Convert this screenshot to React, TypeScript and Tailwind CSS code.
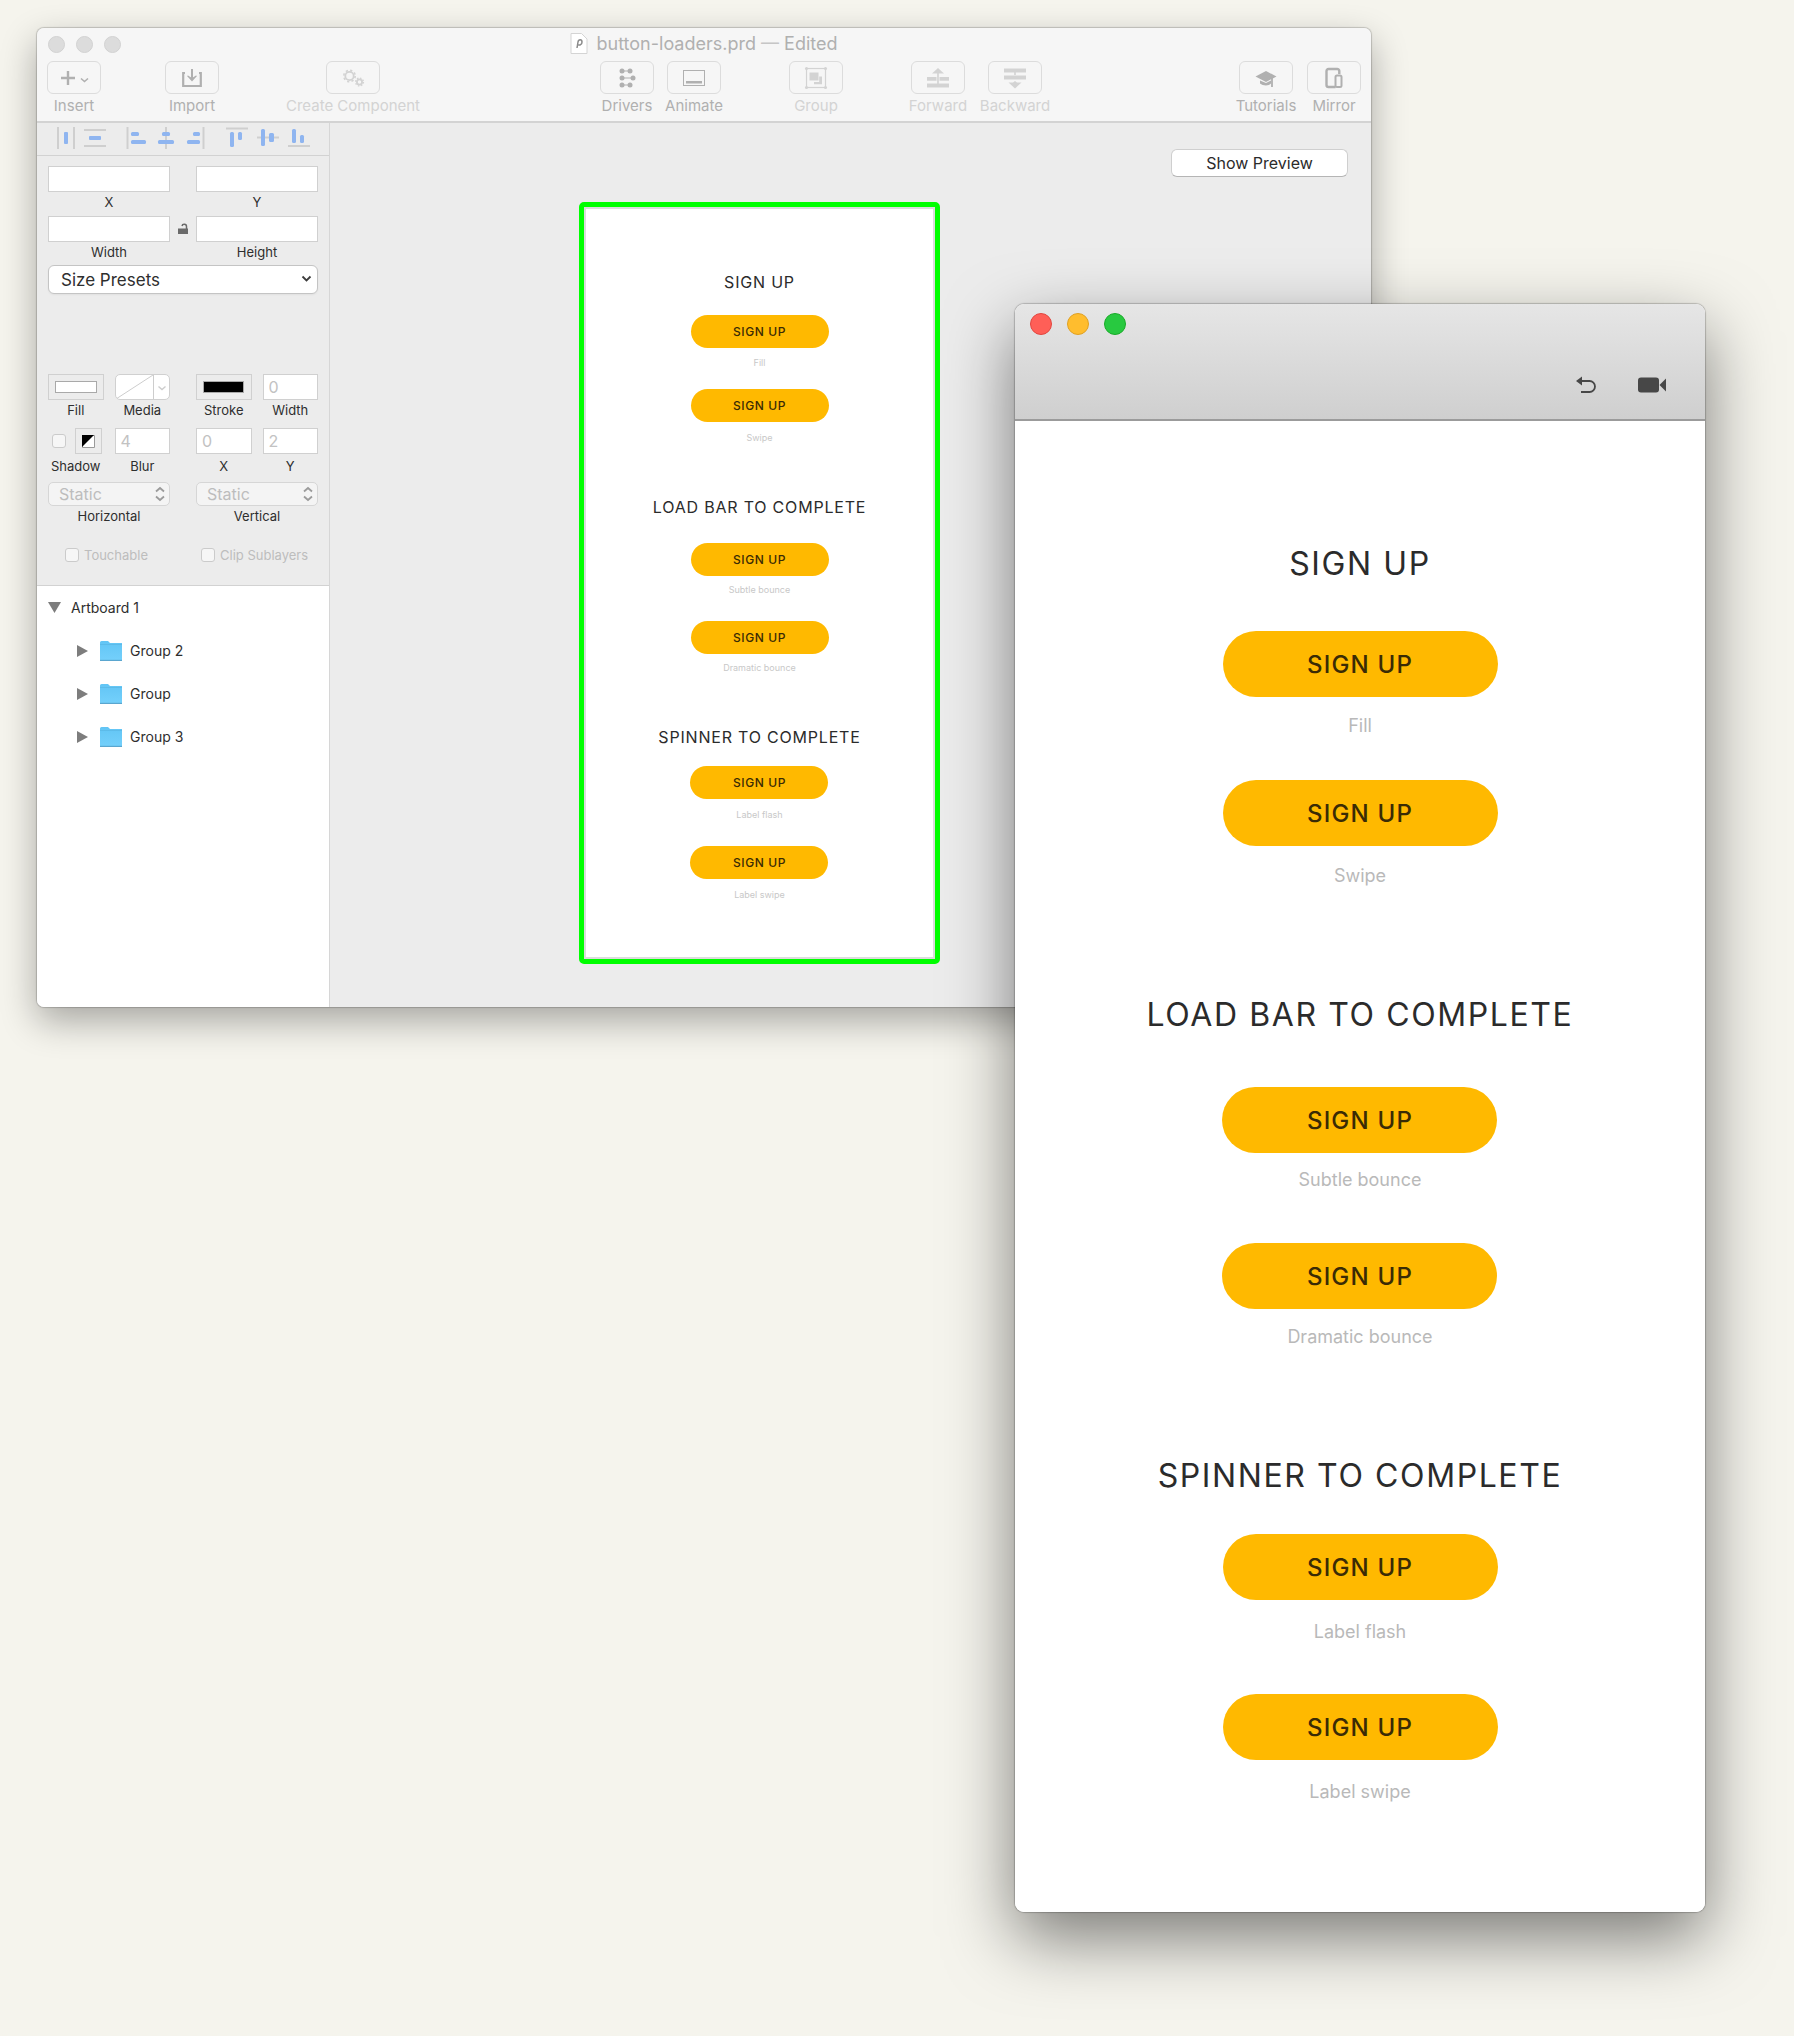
import React, { useId } from "react";

type Size = "small" | "large";

/* ---------- Shared artboard content ---------- */

const ARTBOARD = {
  small: {
    heading: "text-[16px] leading-[20px] tracking-wider",
    button: "w-[138px] h-[33px] text-[12px] tracking-wider",
    caption: "text-[9px] leading-[12px] text-[#c8c8c8]",
    body: "pt-[63px] pb-[56px]",
    sections: [
      { title: "SIGN UP", top: "", items: [["Fill", "mt-[23px]", "mt-[9px]"], ["Swipe", "mt-[20px]", "mt-[10px]"]] },
      { title: "LOAD BAR TO COMPLETE", top: "mt-[53px]", items: [["Subtle bounce", "mt-[26px]", "mt-[8px]"], ["Dramatic bounce", "mt-[25px]", "mt-[8px]"]] },
      { title: "SPINNER TO COMPLETE", top: "mt-[53px]", items: [["Label flash", "mt-[19px]", "mt-[10px]"], ["Label swipe", "mt-[25px]", "mt-[10px]"]] },
    ],
  },
  large: {
    heading: "text-[32px] leading-[40px] tracking-wider",
    button: "w-[275px] h-[66px] pt-0.5 text-[24px] tracking-wider",
    caption: "text-[18px] leading-[24px] text-[#b9b9b9]",
    body: "pt-[123px] pb-[108px]",
    sections: [
      { title: "SIGN UP", top: "", items: [["Fill", "mt-[47px]", "mt-[17px]"], ["Swipe", "mt-[42px]", "mt-[18px]"]] },
      { title: "LOAD BAR TO COMPLETE", top: "mt-[107px]", items: [["Subtle bounce", "mt-[52px]", "mt-[15px]"], ["Dramatic bounce", "mt-[51px]", "mt-[16px]"]] },
      { title: "SPINNER TO COMPLETE", top: "mt-[107px]", items: [["Label flash", "mt-[38px]", "mt-[20px]"], ["Label swipe", "mt-[50px]", "mt-[20px]"]] },
    ],
  },
};

function ArtboardContent({ size }: { size: Size }) {
  const s = ARTBOARD[size];
  return (
    <div className={`flex flex-col items-center bg-white ${s.body}`}>
      {s.sections.map((sec) => (
        <section key={sec.title} className={`flex flex-col items-center ${sec.top}`}>
          <h2 className={`whitespace-nowrap text-[#2b2b2b] ${s.heading}`}>{sec.title}</h2>
          {sec.items.map(([caption, gap, capGap]) => (
            <div key={caption} className={`flex flex-col items-center ${gap}`}>
              <button className={`rounded-full bg-[#ffb900] font-medium text-[#3a2b05] ${s.button}`}>SIGN UP</button>
              <p className={`${s.caption} ${capGap}`}>{caption}</p>
            </div>
          ))}
        </section>
      ))}
    </div>
  );
}

/* ---------- Toolbar ---------- */

const I = ({ children, w = 26, h = 22 }: { children: React.ReactNode; w?: number; h?: number }) => (
  <svg width={w} height={h} viewBox={`0 0 ${w} ${h}`} fill="none" aria-hidden="true">{children}</svg>
);

const icons = {
  insert: (
    <I w={30}>
      <path d="M2 11h14M9 4v14" stroke="currentColor" strokeWidth="2.400" />
      <path d="M22 11.500l3.500 3 3.500-3" stroke="currentColor" strokeWidth="1.600" />
    </I>
  ),
  import: (
    <I>
      <path d="M6 6H4.200v13h17.600V6H20" stroke="currentColor" strokeWidth="2.200" />
      <path d="M13 2v9" stroke="currentColor" strokeWidth="2" />
      <path d="M8 9l5 5.500L18 9l-1-.6-4 2.600-4-2.600z" fill="currentColor" />
    </I>
  ),
  component: (
    <I>
      <circle cx="9.500" cy="9" r="4.200" stroke="currentColor" strokeWidth="1.800" />
      <circle cx="9.500" cy="9" r="5.700" stroke="currentColor" strokeWidth="1.600" strokeDasharray="2.200 2.270" />
      <circle cx="19.500" cy="15" r="2.600" stroke="currentColor" strokeWidth="1.800" />
      <circle cx="19.500" cy="15" r="3.900" stroke="currentColor" strokeWidth="1.400" strokeDasharray="1.530 1.530" />
    </I>
  ),
  drivers: (
    <I>
      <path d="M8 4h8M8 11h11M8 18h8" stroke="currentColor" strokeWidth="1.200" />
      {[[8, 4], [16, 4], [8, 11], [19, 11], [8, 18], [16, 18]].map(([x, y]) => (
        <circle key={`${x}-${y}`} cx={x} cy={y} r="2.500" fill="currentColor" />
      ))}
    </I>
  ),
  animate: (
    <I>
      <rect x="2.500" y="3.500" width="21" height="15" stroke="currentColor" />
      <path d="M5 15.200h16" stroke="currentColor" strokeWidth="2.400" />
    </I>
  ),
  group: (
    <I>
      <rect x="3.500" y="1.500" width="19" height="19" stroke="currentColor" strokeWidth="1.200" />
      {[[3.5, 1.5], [22.5, 1.5], [3.5, 20.5], [22.5, 20.5]].map(([x, y]) => (
        <circle key={`${x}-${y}`} cx={x} cy={y} r="1.500" fill="currentColor" />
      ))}
      <path d="M6.500 5.500h9v8h-9zM11 15h5.200V9.500H19v7.800h-8z" fill="currentColor" />
    </I>
  ),
  forward: (
    <I>
      <path d="M13 4v13" stroke="currentColor" strokeWidth="1.600" />
      <path d="M7 6.500L13 1l6 5.500z" fill="currentColor" />
      <path d="M2 11.800h9.500M14.500 11.800H24M2 18.500h22" stroke="currentColor" strokeWidth="3.800" />
    </I>
  ),
  backward: (
    <I>
      <path d="M2 3.500h22M2 10.500h22" stroke="currentColor" strokeWidth="3.800" />
      <path d="M13 5v3" stroke="currentColor" strokeWidth="1.600" />
      <path d="M6.500 15.500h4.500L13 14l2 1.500h4.500L13 21.500z" fill="currentColor" />
    </I>
  ),
  tutorials: (
    <I>
      <path d="M13 4L2.500 9.500 13 15l10.500-5.500z" fill="currentColor" />
      <path d="M7 13.500v3c3 2.600 9 2.600 11 0v-3l-5 2.500z" fill="currentColor" />
      <path d="M19 11v9" stroke="currentColor" strokeWidth="1.800" />
    </I>
  ),
  mirror: (
    <I>
      <path d="M18.300 7V4a2 2 0 0 0-2-2H7.500a2 2 0 0 0-2 2v14a2 2 0 0 0 2 2h7" stroke="currentColor" strokeWidth="2.400" />
      <rect x="14.500" y="8.500" width="6" height="11.500" rx="1.500" stroke="currentColor" strokeWidth="2" />
    </I>
  ),
};

function Tool({ icon, label, className, dim }: { icon: React.ReactNode; label: string; className: string; dim?: boolean }) {
  return (
    <button className={`flex shrink-0 flex-col items-center ${dim ? "text-[#d3d3d3]" : "text-[#b0b0b0]"} ${className}`}>
      <span className="flex h-[33px] w-[54px] items-center justify-center rounded-md border border-[#dcdcdc]">{icon}</span>
      <span className="mt-0.5 text-[15px] leading-5 whitespace-nowrap">{label}</span>
    </button>
  );
}

function EditorHeader() {
  return (
    <header className="border-b-2 border-[#d3d3d3] bg-[#f6f6f6]">
      <div className="grid h-[33px] grid-cols-[1fr_auto_1fr] items-center px-[11px]">
        <div className="flex gap-[11px]">
          {["Close", "Minimise", "Zoom"].map((n) => (
            <button key={n} aria-label={n} className="size-[17px] rounded-full border border-[#d2d2d2] bg-[#dcdcdc]" />
          ))}
        </div>
        <h1 className="flex items-center gap-2 pb-0.5 text-[18px] leading-6 text-[#b0b0b0]">
          <svg width="18" height="21" viewBox="0 0 18 21" fill="#fff" stroke="#d4d4d4" aria-hidden="true">
            <path d="M1 .5h10.500L17 6v14.500H1z" />
            <path d="M7 15l1-6c.5-3 4-3 4 0 0 2.500-2.500 3.500-3.600 2.600" fill="none" stroke="#8a8a8a" strokeWidth="1.500" />
          </svg>
          <span>button-loaders.prd <span className="text-[#c6c6c6]">—</span> Edited</span>
        </h1>
      </div>
      <div className="flex pr-[10px] pb-[5px] pl-[10px]">
        <Tool icon={icons.insert} label="Insert" className="w-[54px]" />
        <Tool icon={icons.import} label="Import" className="ml-16 w-[54px]" />
        <Tool icon={icons.component} label="Create Component" className="ml-[66px] w-[136px]" dim />
        <Tool icon={icons.drivers} label="Drivers" className="ml-[179px] w-[54px]" />
        <Tool icon={icons.animate} label="Animate" className="ml-[11px] w-[58px]" />
        <Tool icon={icons.group} label="Group" className="ml-[66px] w-[54px]" dim />
        <Tool icon={icons.forward} label="Forward" className="ml-[66px] w-[58px]" dim />
        <Tool icon={icons.backward} label="Backward" className="ml-[13px] w-[70px]" dim />
        <Tool icon={icons.tutorials} label="Tutorials" className="ml-auto w-[62px]" />
        <Tool icon={icons.mirror} label="Mirror" className="ml-[10px] w-[54px]" />
      </div>
    </header>
  );
}

/* ---------- Inspector ---------- */

const B = "#8fb5f0";
const G = "#cfcfcf";

const ALIGN: { label: string; gap: string; art: React.ReactNode }[] = [
  { label: "Distribute horizontally", gap: "", art: <><path d="M3 0v22M19 0v22" stroke={G} strokeWidth="2" /><rect x="9" y="5" width="4" height="12" rx="1" fill={B} /></> },
  { label: "Distribute vertically", gap: "ml-[7px]", art: <><path d="M0 3h22M0 19h22" stroke={G} strokeWidth="2" /><rect x="5" y="9" width="12" height="4" rx="1" fill={B} /></> },
  { label: "Align left", gap: "ml-[19px]", art: <><path d="M2.500 0v22" stroke={G} strokeWidth="2" /><rect x="6" y="5" width="8" height="4" rx="1.500" fill={B} /><rect x="6" y="13" width="15" height="4" rx="1.500" fill={B} /></> },
  { label: "Align centre", gap: "ml-[8px]", art: <><path d="M11 0v22" stroke={G} strokeWidth="2" /><rect x="7" y="5" width="8" height="4" rx="1.500" fill={B} /><rect x="3" y="13" width="16" height="4" rx="1.500" fill={B} /></> },
  { label: "Align right", gap: "ml-[8px]", art: <><path d="M18.500 0v22" stroke={G} strokeWidth="2" /><rect x="8" y="5" width="7" height="4" rx="1.500" fill={B} /><rect x="2" y="13" width="13" height="4" rx="1.500" fill={B} /></> },
  { label: "Align top", gap: "ml-[19px]", art: <><path d="M0 1.500h22" stroke={G} strokeWidth="2" /><rect x="4" y="5" width="4" height="15" rx="1.500" fill={B} /><rect x="12" y="5" width="4" height="8" rx="1.500" fill={B} /></> },
  { label: "Align middle", gap: "ml-[9px]", art: <><path d="M0 10.500h22" stroke={G} strokeWidth="2" /><rect x="4" y="2" width="4" height="17" rx="1.500" fill={B} /><rect x="12" y="6" width="5" height="9" rx="1.500" fill={B} /></> },
  { label: "Align bottom", gap: "ml-[9px]", art: <><path d="M0 19h22" stroke={G} strokeWidth="2" /><rect x="4" y="2" width="4" height="14" rx="1.500" fill={B} /><rect x="12" y="8" width="4" height="8" rx="1.500" fill={B} /></> },
];

const LABEL = "block text-center text-[13px] leading-5 text-[#2e2e2e]";

function Field({ label, value = "", labelClass = "" }: { label: string; value?: string; labelClass?: string }) {
  const id = useId();
  return (
    <div className="min-w-0">
      <input id={id} defaultValue={value} className="block h-[26px] w-full border border-[#d0d0d0] bg-white px-[5px] text-[16px] text-[#c2c2c2] outline-none" />
      <label htmlFor={id} className={`${LABEL} ${labelClass}`}>{label}</label>
    </div>
  );
}

function StaticSelect({ label }: { label: string }) {
  const id = useId();
  return (
    <div>
      <div className="relative">
        <select id={id} className="block h-6 w-full appearance-none rounded-[5px] border border-[#d6d6d6] bg-[#f4f4f4] pl-[10px] text-[16px] leading-5 text-[#bdbdbd]">
          <option>Static</option>
        </select>
        <svg className="pointer-events-none absolute top-1 right-1" width="12" height="16" viewBox="0 0 12 16" fill="none" stroke="#9b9b9b" strokeWidth="1.800" aria-hidden="true">
          <path d="M2 5.500L6 2l4 3.500M2 10.500L6 14l4-3.500" />
        </svg>
      </div>
      <label htmlFor={id} className={LABEL}>{label}</label>
    </div>
  );
}

const CHECK = "size-[14px] shrink-0 appearance-none rounded-[3px] border border-[#cbcbcb] bg-[#f6f6f6]";

function Inspector() {
  return (
    <div className="border-b border-[#d2d2d2] bg-[#ececec]">
      <div className="flex h-[33px] items-center border-b border-[#d2d2d2] pb-0.5 pl-[18px]">
        {ALIGN.map((a) => (
          <button key={a.label} aria-label={a.label} className={a.gap}>
            <svg width="22" height="22" viewBox="0 0 22 22" fill="none" aria-hidden="true">{a.art}</svg>
          </button>
        ))}
      </div>
      <div className="px-[11px] pt-[10px] pb-5">
        <div className="grid grid-cols-[1fr_26px_1fr] gap-y-1">
          <Field label="X" />
          <span />
          <Field label="Y" />
          <Field label="Width" />
          <button aria-label="Unlock proportions" className="flex h-[26px] items-center justify-center">
            <svg width="12" height="12" viewBox="0 0 12 12" aria-hidden="true">
              <path d="M1 5.500h10V11H1z" fill="#6a6a6a" />
              <path d="M9.500 6V3.500C9.500.8 5.500.6 5 3" fill="none" stroke="#6a6a6a" strokeWidth="1.500" />
            </svg>
          </button>
          <Field label="Height" />
        </div>
        <div className="relative mt-[3px]">
          <select aria-label="Size Presets" className="block h-[29px] w-full appearance-none rounded-md border border-[#c4c4c4] bg-white pl-3 text-[17px] leading-6 text-[#2e2e2e] shadow-xs">
            <option>Size Presets</option>
          </select>
          <svg className="pointer-events-none absolute top-[10px] right-[6px]" width="11" height="8" viewBox="0 0 11 8" fill="none" stroke="#3c3c3c" strokeWidth="1.800" aria-hidden="true">
            <path d="M1.500 1.500l4 4 4-4" />
          </svg>
        </div>

        <div className="mt-20 grid grid-cols-2 gap-x-[26px] gap-y-2">
          <div className="grid grid-cols-2 gap-x-[11px]">
            <div>
              <button id="fill" className="flex h-[26px] w-full items-center justify-center border border-[#d0d0d0]">
                <span className="h-3 w-[42px] border border-[#a9a9a9] bg-white" />
              </button>
              <label htmlFor="fill" className={LABEL}>Fill</label>
            </div>
            <div>
              <button id="media" className="block h-[26px] w-full overflow-hidden rounded-[5px] border border-[#d0d0d0] bg-white">
                <svg width="54" height="24" viewBox="0 0 54 24" fill="none" stroke="#cdcdcd" aria-hidden="true">
                  <path d="M0 24L37 0M37.500 0v24" />
                  <path d="M42.500 11.500l3.500 3 3.500-3" strokeWidth="1.400" />
                </svg>
              </button>
              <label htmlFor="media" className={LABEL}>Media</label>
            </div>
          </div>
          <div className="grid grid-cols-2 gap-x-[11px]">
            <div>
              <button id="stroke" className="flex h-[26px] w-full items-center justify-center border border-[#d0d0d0]">
                <span className="h-3 w-[41px] border border-[#a9a9a9] bg-black" />
              </button>
              <label htmlFor="stroke" className={LABEL}>Stroke</label>
            </div>
            <Field label="Width" value="0" />
          </div>

          <div className="grid grid-cols-2 gap-x-[11px]">
            <div>
              <div className="flex items-center pl-1">
                <input id="shadow" type="checkbox" className={CHECK} />
                <button aria-label="Shadow colour" className="ml-[9px] flex h-[26px] w-[27px] items-center justify-center border border-[#d0d0d0]">
                  <svg width="13" height="13" viewBox="0 0 13 13" aria-hidden="true">
                    <path d="M.5.500h12v12H.500z" fill="#fff" stroke="#9a9a9a" />
                    <path d="M0 0h12L0 12z" fill="#000" />
                  </svg>
                </button>
              </div>
              <label htmlFor="shadow" className={`${LABEL} mt-0.5`}>Shadow</label>
            </div>
            <Field label="Blur" value="4" labelClass="mt-0.5" />
          </div>
          <div className="grid grid-cols-2 gap-x-[11px]">
            <Field label="X" value="0" labelClass="mt-0.5" />
            <Field label="Y" value="2" labelClass="mt-0.5" />
          </div>
        </div>

        <div className="mt-1.5 grid grid-cols-2 gap-x-[26px]">
          <StaticSelect label="Horizontal" />
          <StaticSelect label="Vertical" />
        </div>

        <div className="mt-[19px] flex text-[13px] leading-5 whitespace-nowrap text-[#bdbdbd]">
          <label className="flex w-[136px] items-center gap-[5px] pl-[17px]">
            <input type="checkbox" className={CHECK} />
            Touchable
          </label>
          <label className="flex items-center gap-[5px] pl-[17px]">
            <input type="checkbox" className={CHECK} />
            Clip Sublayers
          </label>
        </div>
      </div>
    </div>
  );
}

function LayerTree() {
  return (
    <ul className="grow bg-white text-[14px] leading-5 text-[#2e2e2e]">
      <li>
        <div className="flex h-[43px] items-center pl-[11px]">
          <svg width="13" height="11" viewBox="0 0 13 11" fill="#7d7d7d" aria-hidden="true"><path d="M0 0h13L6.500 11z" /></svg>
          <span className="ml-[10px]">Artboard 1</span>
        </div>
        <ul>
          {["Group 2", "Group", "Group 3"].map((name) => (
            <li key={name} className="flex h-[43px] items-center pl-10">
              <svg width="11" height="12" viewBox="0 0 11 12" fill="#7d7d7d" aria-hidden="true"><path d="M0 0l11 6-11 6z" /></svg>
              <svg className="ml-3" width="22" height="20" viewBox="0 0 22 20" aria-hidden="true">
                <defs>
                  <linearGradient id="folder" x1="0" y1="0" x2="0" y2="1">
                    <stop offset="0" stopColor="#62c5f5" />
                    <stop offset="1" stopColor="#74d0fb" />
                  </linearGradient>
                </defs>
                <path d="M0 1.500Q0 0 1.500 0H8l2 2h12V19.500H0z" fill="url(#folder)" />
                <path d="M0 19.400h22" stroke="#5aa6cf" strokeWidth="1.200" />
                <path d="M0 3.500h22" stroke="#5ab7e6" strokeWidth=".8" />
              </svg>
              <span className="ml-2">{name}</span>
            </li>
          ))}
        </ul>
      </li>
    </ul>
  );
}

/* ---------- Windows ---------- */

function EditorWindow() {
  return (
    <section className="col-start-1 row-start-1 mt-7 mr-[423px] ml-[37px] flex flex-col self-start overflow-hidden rounded-[7px] bg-[#ececec] shadow-[0_0_1px_1px_rgba(0,0,0,0.18),0_14px_36px_rgba(0,0,0,0.32)]">
      <EditorHeader />
      <div className="flex">
        <aside className="flex w-[293px] shrink-0 flex-col border-r border-[#d6d6d6]">
          <Inspector />
          <LayerTree />
        </aside>
        <div className="flex grow items-start justify-between pr-[23px] pb-[43px] pl-[249px]">
          <div className="mt-[79px] w-[361px] shrink-0 rounded-[5px] border-5 border-[#00ff00] bg-[#dcdcdc] p-0.5">
            <ArtboardContent size="small" />
          </div>
          <button className="mt-[26px] h-7 w-[177px] shrink-0 rounded-md border border-[#cfcfcf] border-b-[#b5b5b5] bg-white text-[16px] leading-6 text-[#2b2b2b]">
            Show Preview
          </button>
        </div>
      </div>
    </section>
  );
}

function PreviewWindow() {
  return (
    <section className="col-start-1 row-start-1 mt-[304px] mr-[89px] mb-[124px] w-[690px] self-start justify-self-end overflow-hidden rounded-[9px] bg-white shadow-[0_0_1px_1px_rgba(0,0,0,0.2),0_26px_68px_rgba(0,0,0,0.5)]">
      <header className="border-b-2 border-[#9b9b9b] bg-linear-to-b from-[#e6e6e6] to-[#cfcfcf] px-[15px] pt-[9px] pb-6">
        <div className="flex gap-[15px]">
          <button aria-label="Close" className="size-[22px] rounded-full border border-[#e2463f] bg-[#ff5f57]" />
          <button aria-label="Minimise" className="size-[22px] rounded-full border border-[#e0a123] bg-[#ffbd2e]" />
          <button aria-label="Zoom" className="size-[22px] rounded-full border border-[#1aab29] bg-[#28c940]" />
        </div>
        <div className="mt-10 flex justify-end gap-[42px] pr-6 text-[#474747]">
          <button aria-label="Restart">
            <svg width="20" height="20" viewBox="0 0 20 20" fill="none" aria-hidden="true">
              <path d="M4 6h9.500a5.500 5.500 0 0 1 0 11H5" stroke="currentColor" strokeWidth="1.800" />
              <path d="M0 6l6-4.500v9z" fill="currentColor" />
            </svg>
          </button>
          <button aria-label="Record">
            <svg width="28" height="20" viewBox="0 0 28 20" fill="currentColor" aria-hidden="true">
              <rect x="0" y="2.500" width="21" height="15" rx="3" />
              <path d="M21.500 10l6.500-6.500v13z" />
            </svg>
          </button>
        </div>
      </header>
      <ArtboardContent size="large" />
    </section>
  );
}

export default function App() {
  return (
    <main className="grid min-h-screen bg-[#f5f4ed] font-['Inter',sans-serif]">
      <EditorWindow />
      <PreviewWindow />
    </main>
  );
}
